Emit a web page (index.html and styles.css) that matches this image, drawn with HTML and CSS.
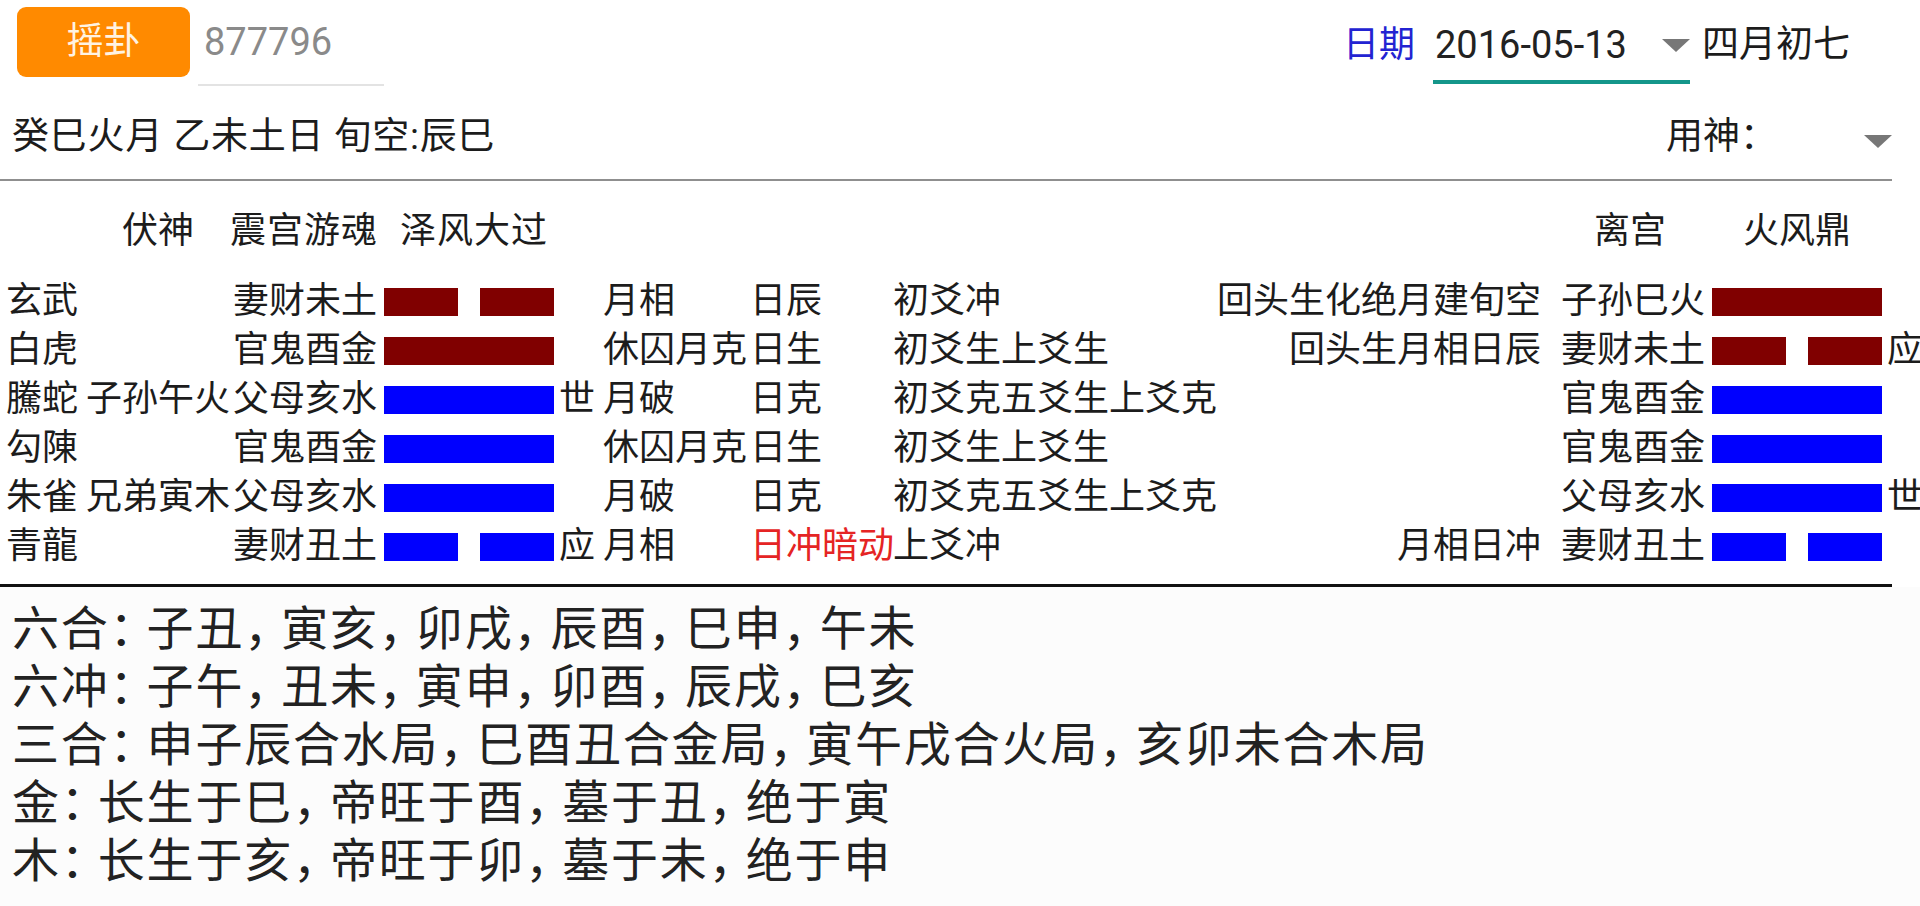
FILE: index.html
```html
<!DOCTYPE html>
<html lang="zh-CN">
<head>
  <meta charset="UTF-8" />
  <meta name="viewport" content="width=device-width, initial-scale=1.0" />
  <title>六爻排盘</title>
  <link rel="stylesheet" href="styles.css">
</head>
<body>
  <div class="top-bar">
    <button class="shake-btn">摇卦</button>
    <div class="num-field">877796</div>
    <div class="date-group">
      <span class="date-label">日期</span>
      <div class="date-field"><span>2016-05-13</span><i class="caret"></i></div>
      <span class="lunar">四月初七</span>
    </div>
  </div>

  <div class="info-bar">
    <span class="ganzhi">癸巳火月 乙未土日 旬空:辰巳</span>
    <div class="yongshen"><span>用神：</span><i class="caret low"></i></div>
  </div>

  <hr class="line-thin">

  <div class="gua-row gua-head">
    <span class="h-fushen">伏神</span>
    <span class="h-title">震宫游魂 泽风大过</span>
    <span class="h-palace">离宫</span>
    <span class="h-bian">火风鼎</span>
  </div>

  <div class="gua-rows">
    <div class="gua-row">
      <span>玄武</span><span></span><span class="c-name">妻财未土</span>
      <span class="c-bar"><span class="yao yin red"><b></b><b></b></span></span>
      <span class="c-mark"></span>
      <span class="c-yue">月相</span><span>日辰</span><span>初爻冲</span>
      <span class="c-desc">回头生化绝月建旬空</span><span class="c-name">子孙巳火</span>
      <span class="c-bar"><span class="yao yang red"></span></span>
      <span class="c-mark"></span>
    </div>
    <div class="gua-row">
      <span>白虎</span><span></span><span class="c-name">官鬼酉金</span>
      <span class="c-bar"><span class="yao yang red"></span></span>
      <span class="c-mark"></span>
      <span class="c-yue">休囚月克</span><span>日生</span><span>初爻生上爻生</span>
      <span class="c-desc">回头生月相日辰</span><span class="c-name">妻财未土</span>
      <span class="c-bar"><span class="yao yin red"><b></b><b></b></span></span>
      <span class="c-mark">应</span>
    </div>
    <div class="gua-row">
      <span>騰蛇</span><span>子孙午火</span><span class="c-name">父母亥水</span>
      <span class="c-bar"><span class="yao yang blue"></span></span>
      <span class="c-mark">世</span>
      <span class="c-yue">月破</span><span>日克</span><span>初爻克五爻生上爻克</span>
      <span class="c-desc"></span><span class="c-name">官鬼酉金</span>
      <span class="c-bar"><span class="yao yang blue"></span></span>
      <span class="c-mark"></span>
    </div>
    <div class="gua-row">
      <span>勾陳</span><span></span><span class="c-name">官鬼酉金</span>
      <span class="c-bar"><span class="yao yang blue"></span></span>
      <span class="c-mark"></span>
      <span class="c-yue">休囚月克</span><span>日生</span><span>初爻生上爻生</span>
      <span class="c-desc"></span><span class="c-name">官鬼酉金</span>
      <span class="c-bar"><span class="yao yang blue"></span></span>
      <span class="c-mark"></span>
    </div>
    <div class="gua-row">
      <span>朱雀</span><span>兄弟寅木</span><span class="c-name">父母亥水</span>
      <span class="c-bar"><span class="yao yang blue"></span></span>
      <span class="c-mark"></span>
      <span class="c-yue">月破</span><span>日克</span><span>初爻克五爻生上爻克</span>
      <span class="c-desc"></span><span class="c-name">父母亥水</span>
      <span class="c-bar"><span class="yao yang blue"></span></span>
      <span class="c-mark">世</span>
    </div>
    <div class="gua-row">
      <span>青龍</span><span></span><span class="c-name">妻财丑土</span>
      <span class="c-bar"><span class="yao yin blue"><b></b><b></b></span></span>
      <span class="c-mark">应</span>
      <span class="c-yue">月相</span><span class="warn">日冲暗动</span><span>上爻冲</span>
      <span class="c-desc">月相日冲</span><span class="c-name">妻财丑土</span>
      <span class="c-bar"><span class="yao yin blue"><b></b><b></b></span></span>
      <span class="c-mark"></span>
    </div>
  </div>

  <hr class="line-thick">

  <div class="notes">
    <p>六合<i>：</i>子丑<i>，</i>寅亥<i>，</i>卯戌<i>，</i>辰酉<i>，</i>巳申<i>，</i>午未</p>
    <p>六冲<i>：</i>子午<i>，</i>丑未<i>，</i>寅申<i>，</i>卯酉<i>，</i>辰戌<i>，</i>巳亥</p>
    <p>三合<i>：</i>申子辰合水局<i>，</i>巳酉丑合金局<i>，</i>寅午戌合火局<i>，</i>亥卯未合木局</p>
    <p>金<i>：</i>长生于巳<i>，</i>帝旺于酉<i>，</i>墓于丑<i>，</i>绝于寅</p>
    <p>木<i>：</i>长生于亥<i>，</i>帝旺于卯<i>，</i>墓于未<i>，</i>绝于申</p>
  </div>
</body>
</html>
```

FILE: styles.css
```css
:root {
  --orange: #ff8a00;
  --teal: #14968a;
  --ink: #1c1c1c;
  --dark-red: #800000;
  --blue: #0000ff;
}

* { box-sizing: border-box; }
html, body { margin: 0; height: 100%; overflow: hidden; }
body {
  font-family: Roboto, "Noto Sans CJK SC", sans-serif;
  color: var(--ink);
  background: #fff;
}

/* top bar */
.top-bar {
  display: flex;
  align-items: flex-start;
  height: 88px;
  padding: 7px 0 0 17px;
}
.shake-btn {
  width: 173px;
  height: 70px;
  padding: 0;
  border: none;
  border-radius: 9px;
  background: var(--orange);
  color: #fff3e2;
  font: 37px/70px Roboto, "Noto Sans CJK SC", sans-serif;
}
.num-field {
  margin-left: 8px;
  width: 186px;
  height: 79px;
  padding-left: 6px;
  line-height: 70px;
  font-size: 38px;
  color: #8a8a8a;
  border-bottom: 2px solid #e3e3e3;
}
.date-group {
  margin-left: auto;
  margin-right: 70px;
  padding-top: 3px;
  display: flex;
  align-items: flex-start;
}
.date-label { font-size: 36px; line-height: 70px; color: #2323d2; }
.date-field {
  margin-left: 18px;
  width: 257px;
  height: 74px;
  padding-left: 2px;
  display: flex;
  align-items: center;
  font-size: 38px;
  line-height: 70px;
  color: #222;
  border-bottom: 4px solid var(--teal);
}
.date-field .caret { margin-left: auto; }
.lunar { margin-left: 12px; font-size: 37px; line-height: 70px; }

.caret {
  display: block;
  width: 0;
  height: 0;
  border-left: 14px solid transparent;
  border-right: 14px solid transparent;
  border-top: 13px solid #777;
}
.caret.low { margin-top: 10px; }

/* info line */
.info-bar {
  display: flex;
  align-items: center;
  height: 49px;
  margin-top: 24px;
  padding-left: 12px;
  font-size: 37px;
  line-height: 49px;
}
.ganzhi { letter-spacing: 0.8px; }
.yongshen {
  margin-left: auto;
  margin-right: 28px;
  width: 226px;
  display: flex;
  align-items: center;
  justify-content: space-between;
}

.line-thin { margin: 18px 28px 0 0; border: 0; height: 2px; background: #8f8f8f; }
.line-thick { margin: 13px 28px 0 0; border: 0; height: 3px; background: #111; }

/* gua table */
.gua-row {
  display: grid;
  grid-template-columns: 80px 144px 147px 177px 41px 155px 143px 308px 340px 164px 177px 38px;
  padding-left: 6px;
  height: 49px;
  font-size: 36px;
  line-height: 49px;
  white-space: nowrap;
}
.gua-head { margin-top: 26px; }
.gua-rows { margin-top: 21px; }

.h-fushen { grid-column: 2; text-align: center; }
.h-title { grid-column: 3 / span 4; word-spacing: 12px; letter-spacing: 1px; }
.h-palace { grid-column: 10; padding-left: 14px; text-align: center; }
.h-bian { grid-column: 11; padding-left: 7px; text-align: center; }

.c-name { text-align: right; }
.c-desc { text-align: right; }
.c-mark { padding-left: 5px; }
.c-yue { padding-left: 8px; }
.c-bar { display: flex; align-items: center; justify-content: flex-end; }
.warn { color: #e52424; }

.yao { display: flex; justify-content: space-between; width: 170px; height: 28px; }
.yao b { width: 74px; height: 100%; }
.yao.yang.red, .yao.red b { background: var(--dark-red); }
.yao.yang.blue, .yao.blue b { background: var(--blue); }

/* notes */
.notes {
  height: 330px;
  padding: 13px 0 0 12px;
  background: #fcfcfc;
  font-size: 47px;
  line-height: 58px;
  letter-spacing: 1.8px;
  color: #222;
}
.notes p { margin: 0; white-space: nowrap; }
.notes i { font-style: normal; letter-spacing: -10px; }
```
